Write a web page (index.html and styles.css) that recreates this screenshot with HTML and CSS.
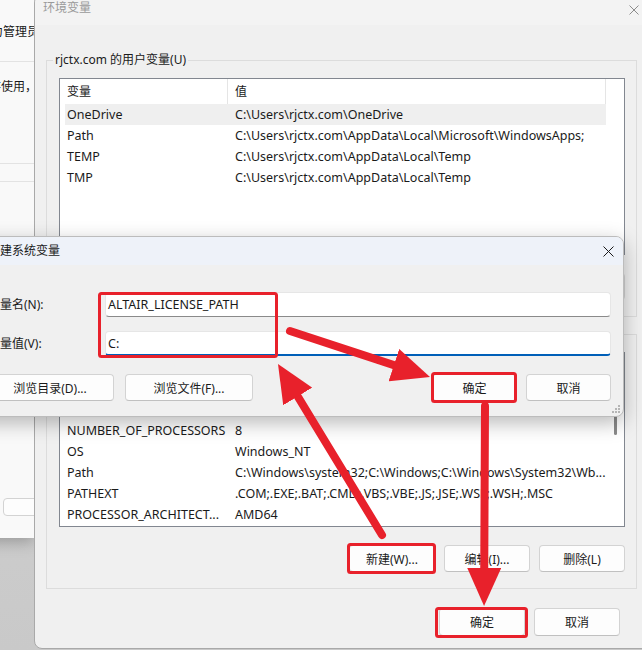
FILE: index.html
```html
<!DOCTYPE html>
<html lang="zh-CN">
  <head>
    <meta charset="UTF-8">
    <meta name="viewport" content="width=device-width, initial-scale=1.0">
    <title>环境变量</title>
    <link rel="stylesheet" href="styles.css">
  </head>
  <body>
    <!-- System properties window, mostly hidden -->
    <div class="back-window">
      <p class="back-text">要进行大多数更改，你必须作为管理员登录。</p>
      <div class="back-rule"></div>
      <p class="back-text back-text-second">视觉效果，处理器计划，内存使用，以及虚拟内存</p>
      <div class="back-rule back-rule-low"></div>
      <div class="back-rule back-rule-close"></div>
      <button class="back-button">设置(S)...</button>
    </div>

    <!-- Environment variables window -->
    <div class="env-window">
      <div class="env-title">
        <span>环境变量</span>
        <svg class="close close-inactive" width="10" height="10" viewBox="0 0 10 10">
          <path d="M0.5 0.5 L9.5 9.5 M9.5 0.5 L0.5 9.5" />
        </svg>
      </div>
      <div class="env-body">
        <fieldset class="group">
          <legend>rjctx.com 的用户变量(U)</legend>
          <div class="list list-user">
            <div class="list-body">
              <div class="list-head">
                <div class="cell cell-name">变量</div>
                <div class="cell cell-value">值</div>
              </div>
              <div class="row selected">
                <div class="cell cell-name">OneDrive</div>
                <div class="cell cell-value">C:\Users\rjctx.com\OneDrive</div>
              </div>
              <div class="row">
                <div class="cell cell-name">Path</div>
                <div class="cell cell-value">C:\Users\rjctx.com\AppData\Local\Microsoft\WindowsApps;</div>
              </div>
              <div class="row">
                <div class="cell cell-name">TEMP</div>
                <div class="cell cell-value">C:\Users\rjctx.com\AppData\Local\Temp</div>
              </div>
              <div class="row">
                <div class="cell cell-name">TMP</div>
                <div class="cell cell-value">C:\Users\rjctx.com\AppData\Local\Temp</div>
              </div>
            </div>
            <div class="list-scroll"></div>
          </div>
          <div class="group-buttons">
            <button class="btn">新建(N)...</button>
            <button class="btn">编辑(E)...</button>
            <button class="btn">删除(D)</button>
          </div>
        </fieldset>

        <fieldset class="group group-system">
          <legend>系统变量(S)</legend>
          <div class="list list-system">
            <div class="list-body">
              <div class="list-head">
                <div class="cell cell-name">变量</div>
                <div class="cell cell-value">值</div>
              </div>
              <div class="row">
                <div class="cell cell-name">ComSpec</div>
                <div class="cell cell-value">C:\Windows\system32\cmd.exe</div>
              </div>
              <div class="row">
                <div class="cell cell-name">DriverData</div>
                <div class="cell cell-value">C:\Windows\System32\Drivers\DriverData</div>
              </div>
              <div class="row">
                <div class="cell cell-name">NUMBER_OF_PROCESSORS</div>
                <div class="cell cell-value">8</div>
              </div>
              <div class="row">
                <div class="cell cell-name">OS</div>
                <div class="cell cell-value">Windows_NT</div>
              </div>
              <div class="row">
                <div class="cell cell-name">Path</div>
                <div class="cell cell-value">C:\Windows\system32;C:\Windows;C:\Windows\System32\Wb...</div>
              </div>
              <div class="row">
                <div class="cell cell-name">PATHEXT</div>
                <div class="cell cell-value">.COM;.EXE;.BAT;.CMD;.VBS;.VBE;.JS;.JSE;.WSF;.WSH;.MSC</div>
              </div>
              <div class="row">
                <div class="cell cell-name">PROCESSOR_ARCHITECT...</div>
                <div class="cell cell-value">AMD64</div>
              </div>
            </div>
            <div class="list-scroll">
              <div class="scroll-thumb"></div>
            </div>
          </div>
          <div class="group-buttons">
            <button class="btn">新建(W)...</button>
            <button class="btn">编辑(I)...</button>
            <button class="btn">删除(L)</button>
          </div>
        </fieldset>

        <div class="env-footer">
          <button class="btn btn-tall">确定</button>
          <button class="btn btn-tall">取消</button>
        </div>
      </div>
    </div>

    <!-- New system variable dialog -->
    <div class="new-dialog">
      <div class="dialog-title">
        <span>新建系统变量</span>
        <svg class="close" width="11" height="11" viewBox="0 0 11 11">
          <path d="M0.5 0.5 L10.5 10.5 M10.5 0.5 L0.5 10.5" />
        </svg>
      </div>
      <div class="dialog-body">
        <div class="field">
          <label class="field-label">变量名(N):</label>
          <div class="field-input">ALTAIR_LICENSE_PATH</div>
        </div>
        <div class="field">
          <label class="field-label">变量值(V):</label>
          <div class="field-input focused">C:</div>
        </div>
        <div class="dialog-buttons">
          <div class="button-group">
            <button class="btn btn-wide">浏览目录(D)...</button>
            <button class="btn btn-wide">浏览文件(F)...</button>
          </div>
          <div class="button-group">
            <button class="btn btn-dialog">确定</button>
            <button class="btn btn-dialog">取消</button>
          </div>
        </div>
      </div>
      <svg class="grip" width="8" height="8" viewBox="0 0 8 8">
        <rect x="6" y="0" width="2" height="2" />
        <rect x="3" y="3" width="2" height="2" />
        <rect x="6" y="3" width="2" height="2" />
        <rect x="0" y="6" width="2" height="2" />
        <rect x="3" y="6" width="2" height="2" />
        <rect x="6" y="6" width="2" height="2" />
      </svg>
    </div>

    <!-- Red annotations drawn over the screenshot -->
    <svg class="marks" width="642" height="650" viewBox="0 0 642 650">
      <defs>
        <marker id="head" markerUnits="userSpaceOnUse" markerWidth="40" markerHeight="34" refX="8" refY="17" orient="auto">
          <path d="M0 0 L38 17 L0 34 Z" fill="#e8212b" />
        </marker>
      </defs>
      <g fill="none" stroke="#e8212b" stroke-width="3">
        <rect x="99.5" y="293.5" width="177" height="63" rx="2" />
        <rect x="432.5" y="373.5" width="83" height="28" rx="2" />
        <rect x="348.5" y="544.5" width="86" height="28" rx="2" />
        <rect x="436.5" y="608.5" width="90" height="28" rx="2" />
      </g>
      <g stroke="#e8212b" stroke-width="8" stroke-linecap="round" marker-end="url(#head)">
        <line x1="290" y1="331" x2="401.5" y2="367.6" />
        <line x1="382" y1="535" x2="293.6" y2="389.6" />
        <line x1="485" y1="406" x2="484.2" y2="576" />
      </g>
    </svg>
  </body>
</html>
```

FILE: styles.css
```css
/* General */
body {
  margin: 0;
  width: 642px;
  height: 650px;
  overflow: hidden;
  position: relative;
  font-family: "Noto Sans", "Noto Sans CJK SC", sans-serif;
  font-size: 12px;
  line-height: 16px;
  color: #1a1a1a;
  background: linear-gradient(180deg, #d8d8d8, #c9c9c9);
}

p {
  margin: 0;
}

.btn {
  width: 86px;
  height: 27px;
  padding: 0;
  background: #fdfdfd;
  border: 1px solid #d3d3d3;
  border-bottom-color: #c0c0c0;
  border-radius: 4px;
  font-family: inherit;
  font-size: 12px;
  color: #1a1a1a;
}

.close {
  stroke: #1a1a1a;
  stroke-width: 1;
  fill: none;
}

.close-inactive {
  stroke: #8c8c8c;
  margin-right: 24px;
  margin-top: 5px;
}

/* Back window (system properties) */
.back-window {
  position: absolute;
  left: -180px;
  top: 0;
  width: 214px;
  height: 538px;
  background: #f9f9f9;
  box-shadow: 0 4px 14px rgba(0, 0, 0, 0.25);
  padding-left: 15px;
  box-sizing: border-box;
  white-space: nowrap;
}

.back-text {
  margin-top: 24px;
}

.back-text-second {
  margin-top: 17px;
  padding-left: 10px;
}

.back-rule {
  border-top: 1px solid #e3e3e3;
  margin-top: 21px;
  margin-left: -15px;
}

.back-rule-low {
  margin-top: 68px;
}

.back-rule-close {
  margin-top: 17px;
}

.back-button {
  display: block;
  margin-top: 316px;
  margin-left: 168px;
  width: 150px;
  height: 18px;
  background: #fdfdfd;
  border: 1px solid #d3d3d3;
  border-radius: 4px;
}

/* Environment variables window */
.env-window {
  position: absolute;
  left: 34px;
  top: -5px;
  width: 630px;
  height: 654px;
  background: #f0f0f0;
  border: 1px solid #a9a9a9;
  border-radius: 8px;
  box-sizing: border-box;
  overflow: hidden;
}

.env-title {
  height: 29px;
  display: flex;
  justify-content: space-between;
  align-items: flex-start;
  padding: 4px 0 0 8px;
  box-sizing: border-box;
  background: #f3f3f3;
  color: #9a9a9a;
}

.env-body {
  padding: 0 26px 0 11px;
}

.group {
  margin: 27px 0 0;
  padding: 10px 11px 16px 12px;
  border: 1px solid #dcdcdc;
  min-width: 0;
}

.group legend {
  padding: 0 2px;
  margin-left: -6px;
  line-height: 16px;
}

.group-system {
  margin-top: 9px;
}

.list {
  display: flex;
  background: #fff;
  border: 1px solid #828790;
  box-sizing: border-box;
}

.list-user {
  height: 177px;
}

.list-system {
  height: 175px;
}

.list-body {
  flex: 1;
  min-width: 0;
  padding-left: 5px;
  overflow: hidden;
}

.list-head {
  display: flex;
  height: 25px;
  align-items: center;
}

.list-head .cell {
  border-right: 1px solid #e5e5e5;
  height: 25px;
  line-height: 25px;
  font-size: 12px;
}

.row {
  display: flex;
  height: 21px;
  align-items: center;
}

.row.selected {
  background: #efefef;
}

.cell {
  padding-left: 2px;
  font-size: 12.5px;
  white-space: nowrap;
  overflow: hidden;
  text-overflow: ellipsis;
  box-sizing: border-box;
}

.cell-name {
  width: 163px;
  flex: none;
}

.row .cell-name {
  padding-right: 1px;
}

.cell-value {
  flex: 1;
  min-width: 0;
  padding-left: 7px;
}

.list-scroll {
  width: 18px;
  flex: none;
}

.scroll-thumb {
  width: 3px;
  height: 65px;
  margin: 17px 0 0 8px;
  background: #8a8a8a;
  border-radius: 2px;
}

.group-buttons {
  display: flex;
  justify-content: flex-end;
  gap: 9px;
  margin-top: 18px;
}

.env-footer {
  display: flex;
  justify-content: flex-end;
  gap: 9px;
  margin-top: 19px;
  padding-right: 17px;
}

.btn-tall {
  height: 28px;
}

/* New system variable dialog */
.new-dialog {
  position: absolute;
  left: -30px;
  top: 236px;
  width: 654px;
  height: 181px;
  background: #f0f0f0;
  border: 1px solid #bcbcbc;
  border-radius: 8px;
  box-sizing: border-box;
  box-shadow: 0 6px 20px rgba(0, 0, 0, 0.28);
  overflow: hidden;
}

.dialog-title {
  height: 28px;
  display: flex;
  justify-content: space-between;
  align-items: center;
  padding: 0 9px 0 17px;
  background: #eef2f9;
}

.dialog-body {
  padding: 27px 12px 0 17px;
}

.field {
  display: flex;
  align-items: center;
  margin-bottom: 14px;
}

.field-label {
  width: 117px;
  flex: none;
  white-space: nowrap;
}

.field-input {
  flex: 1;
  height: 25px;
  line-height: 24px;
  padding-left: 2px;
  font-size: 12.5px;
  background: #fff;
  border: 1px solid #e6e6e6;
  border-bottom-color: #8a8a8a;
  border-radius: 4px;
  box-sizing: border-box;
}

.field-input.focused {
  border-bottom: 2px solid #005fb8;
  line-height: 23px;
}

.dialog-buttons {
  display: flex;
  justify-content: space-between;
  margin-top: 18px;
  margin-left: -2px;
}

.button-group {
  display: flex;
  gap: 9px;
}

.btn-wide {
  width: 128px;
}

.button-group:first-child {
  gap: 11px;
}

.btn-dialog {
  width: 85px;
}

.grip {
  position: absolute;
  right: 3px;
  bottom: 3px;
  fill: #b5b5b5;
}

/* Annotations */
.marks {
  position: absolute;
  left: 0;
  top: 0;
  pointer-events: none;
}
```
